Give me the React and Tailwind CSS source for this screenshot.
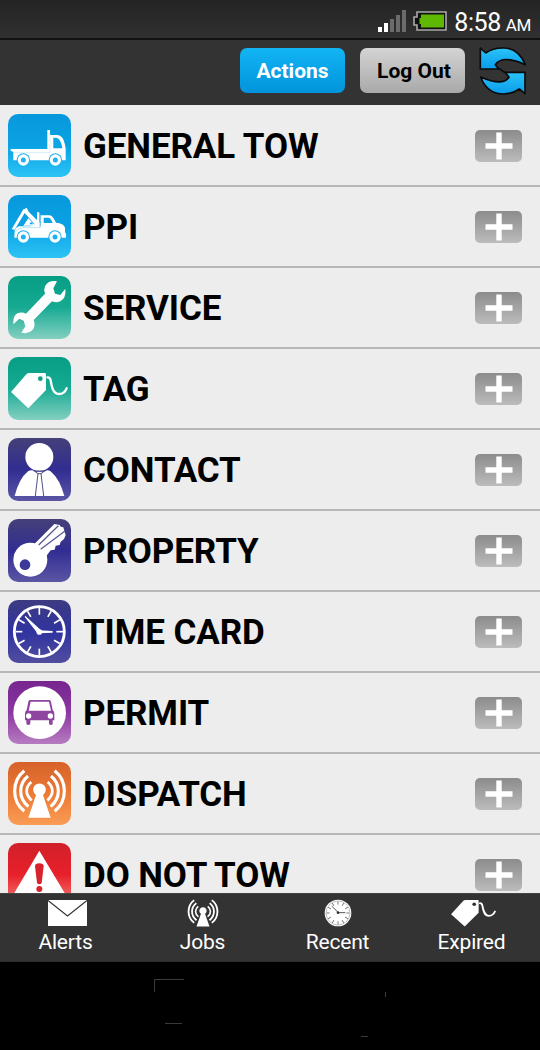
import { useId } from "react";

// ── Icon drawings (63px tiles, drawn on a 189 unit grid) ───────────────────────

function Wheel({ cx, cy }) {
  return (
    <>
      <circle cx={cx} cy={cy} r="20" fill="#18b0ee" />
      <circle cx={cx} cy={cy} r="17" fill="white" />
      <circle cx={cx} cy={cy} r="7.5" fill="#1cb4f0" />
    </>
  );
}

function FlatbedTruck() {
  return (
    <>
      <path d="M8 105H118V48H126V63H146Q166 63 171 92L173 104V139H16V114L8 110Z" fill="white" />
      <path d="M136 71H144Q158 71 163 103H136Z" fill="#0da5e6" />
      <path d="M18 116H126V58" fill="none" stroke="#a9dff7" strokeWidth="1.5" />
      <Wheel cx={46} cy={138} />
      <Wheel cx={142} cy={138} />
    </>
  );
}

function WreckerTruck() {
  return (
    <>
      <path d="M11 103L46 43L54 47L20 104Z" fill="white" />
      <path d="M46 44L56 38L62 50L96 84L94 98H60L80 88L50 54Z" fill="white" />
      <path d="M46 92L61 70L82 92H46Z" fill="white" />
      <path d="M64 88L69 81L76 88Z" fill="#0da5e6" />
      <path d="M20 107Q24 96 34 94H87V52H94V94H98V61H125Q134 62 144 83Q167 85 171 98V112L174 116V128H19Z" fill="white" />
      <path d="M107 68H122Q129 70 134 84H107Z" fill="#0da5e6" />
      <path d="M22 109Q32 99 45 98H96V58" fill="none" stroke="#8fd5f5" strokeWidth="1.8" />
      <Wheel cx={46} cy={126} />
      <Wheel cx={141} cy={126} />
    </>
  );
}

function Wrench() {
  return (
    <path
      d="M147 16Q121 12 111 31Q106 43 111 53L54 113Q43 107 30 111Q14 118 16 145L34 128L47 134L52 151L40 170Q60 175 73 163Q84 150 77 132L132 76Q145 82 157 76Q175 66 172 38L157 57L141 53L136 37Z"
      fill="white"
    />
  );
}

function TagShape({ hole = "#08a088" }) {
  return (
    <>
      <path d="M9 105L55 52Q58 48 64 48H111Q114 48 114 53V99L61 154Z" fill="white" />
      <circle cx="97" cy="65" r="7" fill={hole} />
      <path d="M118 61Q126 60 128 70C132 95 137 111 153 111Q169 111 176 94" fill="none" stroke="white" strokeWidth="7" strokeLinecap="round" />
    </>
  );
}

function Person() {
  return (
    <>
      <circle cx="94" cy="57" r="42" fill="white" />
      <path d="M20 174Q33 122 60 100Q66 96 73 97L81 101H108L117 97Q125 96 130 102Q155 123 169 174Z" fill="white" />
      <path d="M78 98L90 107L82 174M111 98L99 107L107 174M81 99H109M89 107H100" fill="none" stroke="#52527f" strokeWidth="3" />
    </>
  );
}

function Key() {
  return (
    <>
      <circle cx="67" cy="122" r="51" fill="white" />
      <path d="M76 78L139 15L155 18L158 23L166 25L169 36L173 48L168 60L158 68L155 78L143 80L140 92L128 94L111 116Z" fill="white" />
      <path d="M92 78L151 20M98 91L170 37" stroke="#5d5b93" strokeWidth="4" />
      <circle cx="51" cy="137" r="16" fill="#3b379b" />
    </>
  );
}

const HOURS = [0, 30, 60, 90, 120, 150, 180, 210, 240, 270, 300, 330];

function Clock() {
  return (
    <>
      <circle cx="94" cy="95" r="75" fill="none" stroke="white" strokeWidth="8.5" />
      {HOURS.map((a) => (
        <path key={a} d="M94 24V44" stroke="white" strokeWidth="5" transform={`rotate(${a} 94 95)`} />
      ))}
      <path d="M52 50L98 92L91 100Z" fill="white" stroke="white" strokeWidth="3.5" strokeLinejoin="round" />
      <path d="M94 91L134 93V98L94 100Z" fill="white" />
      <circle cx="94" cy="96" r="8.5" fill="white" />
    </>
  );
}

function PermitCar() {
  return (
    <>
      <circle cx="95" cy="95" r="79" fill="white" />
      <path
        fillRule="evenodd"
        d="M66 57H124Q128 57 129 62L134 87Q139 91 139 98V118H134V128Q134 132 129 132Q123 132 123 127V118H67V127Q67 132 61 132Q55 132 55 127V118H51V98Q51 91 56 87L61 62Q62 57 66 57ZM68 62L62 89H129L123 62Z"
        fill="#8e459f"
      />
      <circle cx="62" cy="105" r="8" fill="white" />
      <circle cx="127" cy="105" r="8" fill="white" />
    </>
  );
}

function Antenna() {
  return (
    <>
      <path d="M84 99A19 19 0 1 1 105 99L128 167H61Z" fill="white" />
      <g fill="none" stroke="white" strokeWidth="9.5">
        <path d="M49 26Q20 49 20 87T49 148" />
        <path d="M60 42Q38 60 38 87T61 134" />
        <path d="M70 60Q56 72 56 87T71 115" strokeWidth="8.5" />
        <path d="M140 26Q169 49 169 87T140 148" />
        <path d="M129 42Q151 60 151 87T128 134" />
        <path d="M119 60Q133 72 133 87T118 115" strokeWidth="8.5" />
      </g>
    </>
  );
}

function Warning() {
  return (
    <>
      <path d="M94 23L182 170H7Z" fill="white" />
      <path d="M81 70Q81 61 94 61T107 70L101 119Q99 124 94 124T87 119Z" fill="#d9222b" />
      <circle cx="94" cy="138" r="9" fill="#d9222b" />
    </>
  );
}

function Tile({ stops, children }) {
  const id = useId();
  return (
    <svg className="size-[63px] shrink-0" viewBox="0 0 189 189">
      <defs>
        <linearGradient id={id} x1="0" y1="0" x2="0" y2="1">
          {stops.map((color, i) => (
            <stop key={color} offset={i / (stops.length - 1)} stopColor={color} />
          ))}
        </linearGradient>
      </defs>
      <rect width="189" height="189" rx="30" fill={`url(#${id})`} />
      {children}
    </svg>
  );
}

// ── Status bar / header icons ──────────────────────────────────────────────────

function SignalIcon() {
  return (
    <svg className="h-6 w-[30px]" viewBox="0 0 30 24">
      <path d="M1 18h4v5h-4zM7 14h4v9h-4z" fill="white" />
      <path d="M13 10h4v13h-4zM19 6h4v17h-4zM25 1h4v22h-4z" fill="#6b6b6b" />
    </svg>
  );
}

function BatteryIcon() {
  return (
    <svg className="h-5 w-[34px]" viewBox="0 0 34 20">
      <path d="M4 1H33V19H4V14H1V6H4Z" fill="#111" stroke="#a9a9a9" strokeWidth="1.6" />
      <path d="M8 3.5H31V16.5H8V13H6.5V7H8Z" fill="#5fb802" />
    </svg>
  );
}

function RefreshIcon() {
  return (
    <svg className="h-12 w-[47px]" viewBox="0 0 141 144">
      <defs>
        <linearGradient id="refresh" x1="0" y1="0" x2="0" y2="1">
          <stop offset="0" stopColor="#2ac3f8" />
          <stop offset="1" stopColor="#0a9ceb" />
        </linearGradient>
      </defs>
      <g fill="url(#refresh)" stroke="#0b0b0b" strokeWidth="5" strokeLinejoin="round">
        <path d="M4 3V66H59L49 53Q70 22 139 53Q118 3 75 3Q42 2 20 18Z" />
        <path d="M138 140V76H79L90 91Q71 119 5 90Q24 141 74 141Q102 140 121 126Z" />
        <path d="M56 62L80 78" fill="none" />
      </g>
    </svg>
  );
}

function PlusButton() {
  return (
    <button className="flex h-8 w-[47px] items-center justify-center rounded-[5px] bg-linear-to-b from-[#8c8c8c] to-[#bcbcbc]">
      <svg className="size-7" viewBox="0 0 28 28">
        <path d="M11.3 0.5H16.7V11.3H27.5V16.7H16.7V27.5H11.3V16.7H0.5V11.3H11.3Z" fill="white" />
      </svg>
    </button>
  );
}

// ── Data ───────────────────────────────────────────────────────────────────────

const BLUE = ["#0898dc", "#0ba2e4", "#2cc3f6"];
const GREEN = ["#069e84", "#17aa93", "#84d0c0"];
const INDIGO = ["#454078", "#312d92", "#5c56a5"];
const NAVY = ["#3d3b80", "#3033a0", "#514d9e"];
const PURPLE = ["#762590", "#8b389f", "#b77bc1"];
const ORANGE = ["#d6622a", "#ec7a35", "#f99c55"];
const RED = ["#d0202a", "#e8202a", "#f58078"];

const ROWS = [
  { label: "GENERAL TOW", stops: BLUE, Icon: FlatbedTruck },
  { label: "PPI", stops: BLUE, Icon: WreckerTruck },
  { label: "SERVICE", stops: GREEN, Icon: Wrench },
  { label: "TAG", stops: GREEN, Icon: TagShape },
  { label: "CONTACT", stops: INDIGO, Icon: Person },
  { label: "PROPERTY", stops: INDIGO, Icon: Key },
  { label: "TIME CARD", stops: NAVY, Icon: Clock },
  { label: "PERMIT", stops: PURPLE, Icon: PermitCar },
  { label: "DISPATCH", stops: ORANGE, Icon: Antenna },
  { label: "DO NOT TOW", stops: RED, Icon: Warning },
];

// ── Footer ─────────────────────────────────────────────────────────────────────

function EnvelopeTab() {
  return (
    <svg className="ml-1 h-7 w-[39px]" viewBox="0 0 39 28">
      <path d="M0 1H39V27H0Z" fill="white" />
      <path d="M0 1.5L19.5 17L39 1.5" fill="none" stroke="#333" strokeWidth="1.2" />
    </svg>
  );
}

function AntennaTab() {
  return (
    <svg className="h-7 w-8" viewBox="12 20 165 150" preserveAspectRatio="none">
      <Antenna />
    </svg>
  );
}

function ClockTab() {
  return (
    <svg className="size-7" viewBox="0 0 84 84">
      <circle cx="42" cy="42" r="40" fill="white" />
      <circle cx="42" cy="42" r="36" fill="none" stroke="#777" strokeWidth="1.4" />
      {HOURS.map((a) => (
        <path key={a} d="M42 8V17" stroke="#333" strokeWidth="2" transform={`rotate(${a} 42 42)`} />
      ))}
      <path d="M23 21L43 41H64" fill="none" stroke="#333" strokeWidth="2.5" />
      <circle cx="42" cy="41" r="4" fill="#333" />
    </svg>
  );
}

function TagTab() {
  return (
    <svg className="ml-0.5 h-7 w-[46px]" viewBox="5 44 175 112" preserveAspectRatio="none">
      <TagShape hole="#333" />
    </svg>
  );
}

const TABS = [
  { label: "Alerts", Icon: EnvelopeTab, className: "pr-1 pt-[5px]" },
  { label: "Jobs", Icon: AntennaTab, className: "pt-[5px]" },
  { label: "Recent", Icon: ClockTab, className: "pt-[5px]" },
  { label: "Expired", Icon: TagTab, className: "pr-0.5 pt-[5px]" },
];

export default function App() {
  return (
    <div className="flex h-[1050px] w-[540px] flex-col overflow-hidden bg-black font-['Roboto',sans-serif]">
      {/* Status bar */}
      <div className="flex h-10 shrink-0 items-center justify-end border-b-2 border-[#111] bg-linear-to-b from-[#242424] to-[#303030] pr-[9px] text-white">
        <div className="flex items-center gap-[6px] pt-1">
          <SignalIcon />
          <BatteryIcon />
        </div>
        <div className="flex items-baseline gap-[5px] pt-[9px] pl-[7px] whitespace-nowrap">
          <span className="text-[25px] leading-8 tracking-[-0.4px]">8:58</span>
          <span className="text-[17px] leading-8 tracking-[-0.4px]">AM</span>
        </div>
      </div>

      {/* Header */}
      <div className="flex h-[65px] shrink-0 items-start bg-[#333] pt-2">
        <button className="ml-60 h-[45px] w-[105px] rounded-[7px] bg-linear-to-b from-[#12b4f4] to-[#0294dc] pt-0.5 text-[21px] font-bold text-white">
          Actions
        </button>
        <button className="ml-[15px] h-[45px] w-[105px] rounded-[7px] bg-linear-to-b from-[#d4d4d4] to-[#a9a9a9] pt-0.5 pl-[3px] text-[21px] font-bold text-black">
          Log Out
        </button>
        <div className="ml-3.5 -mt-px">
          <RefreshIcon />
        </div>
      </div>

      {/* List */}
      <div className="h-[788px] shrink-0 overflow-hidden bg-[#ededed] pt-px">
        {ROWS.map(({ label, stops, Icon }) => (
          <div key={label} className="flex h-[81px] items-center border-b-2 border-[#b6b8b8] pr-[18px] pl-2">
            <Tile stops={stops}>
              <Icon />
            </Tile>
            <span className="ml-3 flex-1 pt-[3px] text-[35px] leading-[32px] font-bold tracking-[-0.1px] whitespace-nowrap text-black">
              {label}
            </span>
            <PlusButton />
          </div>
        ))}
      </div>

      {/* Bottom tabs */}
      <div className="grid h-[68px] shrink-0 grid-cols-4 border-t border-[#444] bg-[#333] text-white">
        {TABS.map(({ label, Icon, className }) => (
          <div key={label} className={`flex flex-col items-center ${className}`}>
            <Icon />
            <span className="text-[21px] leading-[30px] tracking-[-0.2px]">{label}</span>
          </div>
        ))}
      </div>

      {/* Device edge */}
      <div className="flex-1 border-t border-[#2a2a2a]">
        <svg className="h-[88px] w-[540px]" viewBox="0 962 540 88" fill="none" stroke="#3a3a3a">
          <path d="M154.5 992V979.5H184M165 1023.5H182M385.5 992V997M361 1036.5H368" />
        </svg>
      </div>
    </div>
  );
}
